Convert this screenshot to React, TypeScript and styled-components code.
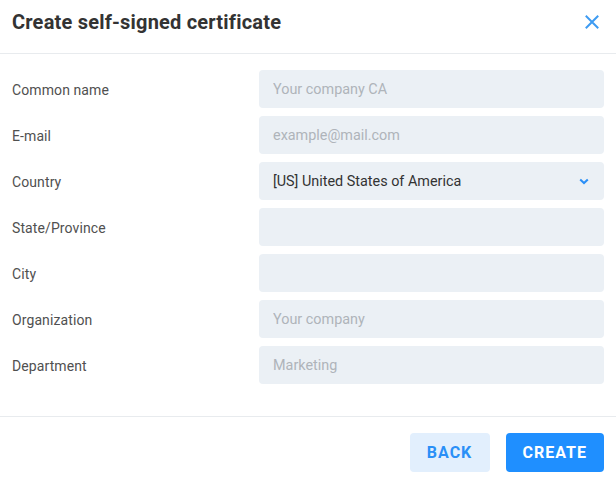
import React from "react";
import styled, { createGlobalStyle } from "styled-components";

const Global = createGlobalStyle`
  html, body { margin: 0; padding: 0; background: #fff; }
  body { font-family: Roboto, "Liberation Sans", Arial, sans-serif; }
  * { box-sizing: border-box; }
`;

const Dialog = styled.div`
  width: 616px;
  height: 478px;
  background: #fff;
  display: flex;
  flex-direction: column;
  overflow: hidden;
`;

const Header = styled.div`
  flex-shrink: 0;
  height: 54px;
  border-bottom: 1px solid #e8ebee;
  display: flex;
  align-items: center;
  justify-content: space-between;
  padding: 0 12px 10px 12px;
`;

const Title = styled.h1`
  margin: 0;
  font-size: 20px;
  font-weight: 700;
  color: #333;
  letter-spacing: 0.2px;
`;

const CloseButton = styled.button`
  border: 0;
  background: none;
  padding: 0;
  width: 24px;
  height: 24px;
  display: flex;
  align-items: center;
  justify-content: center;
  cursor: pointer;
`;

const Body = styled.div`
  flex-shrink: 0;
  display: flex;
  flex-direction: column;
  gap: 8px;
  padding: 16px 12px 32px 12px;
  border-bottom: 1px solid #e8ebee;
`;

const Row = styled.div`
  display: grid;
  grid-template-columns: 247px 1fr;
  align-items: center;
`;

const Label = styled.label`
  font-size: 14px;
  letter-spacing: 0.1px;
  color: #505050;
  padding-top: 2px;
`;

const Input = styled.input`
  height: 38px;
  border: 0;
  border-radius: 4px;
  background: #ebf0f5;
  padding: 0 14px;
  font-family: Roboto, "Liberation Sans", Arial, sans-serif;
  font-size: 14.4px;
  color: #333;
  outline: none;
  width: 100%;
  &::placeholder { color: #afb4ba; }
`;

const SelectBox = styled.div`
  height: 38px;
  border-radius: 4px;
  background: #ebf0f5;
  padding: 0 14px;
  display: flex;
  align-items: center;
  justify-content: space-between;
  font-size: 14.4px;
  color: #333;
`;

const Footer = styled.div`
  flex-shrink: 0;
  display: flex;
  justify-content: flex-end;
  gap: 16px;
  padding: 16px 12px;
`;

const Button = styled.button<{ $primary?: boolean }>`
  height: 39px;
  padding: 0 17px;
  min-width: ${(p) => (p.$primary ? "98px" : "80px")};
  border: 0;
  border-radius: 4px;
  font-family: Roboto, "Liberation Sans", Arial, sans-serif;
  font-size: 16px;
  font-weight: 700;
  letter-spacing: 1px;
  text-transform: uppercase;
  cursor: pointer;
  background: ${(p) => (p.$primary ? "#1f8fff" : "#e2effd")};
  color: ${(p) => (p.$primary ? "#fff" : "#2a8ff7")};
`;

const fields = [
  { label: "Common name", placeholder: "Your company CA" },
  { label: "E-mail", placeholder: "example@mail.com" },
  { label: "Country", select: "[US] United States of America" },
  { label: "State/Province", placeholder: "" },
  { label: "City", placeholder: "" },
  { label: "Organization", placeholder: "Your company" },
  { label: "Department", placeholder: "Marketing" },
];

export default function App() {
  return (
    <>
      <Global />
      <Dialog>
        <Header>
          <Title>Create self-signed certificate</Title>
          <CloseButton aria-label="Close">
            <svg width="14" height="14" viewBox="0 0 14 14">
              <path d="M1.5 1.5 L12.5 12.5 M12.5 1.5 L1.5 12.5" stroke="#3d9bf2" strokeWidth="2" strokeLinecap="square" fill="none" />
            </svg>
          </CloseButton>
        </Header>
        <Body>
          {fields.map((f) => (
            <Row key={f.label}>
              <Label>{f.label}</Label>
              {f.select ? (
                <SelectBox>
                  <span>{f.select}</span>
                  <svg width="10" height="7" viewBox="0 0 10 7" style={{ marginRight: 1 }}>
                    <path d="M1.2 1.4 L5 5 L8.8 1.4" stroke="#2a8ff7" strokeWidth="2" fill="none" />
                  </svg>
                </SelectBox>
              ) : (
                <Input placeholder={f.placeholder} />
              )}
            </Row>
          ))}
        </Body>
        <Footer>
          <Button>Back</Button>
          <Button $primary>Create</Button>
        </Footer>
      </Dialog>
    </>
  );
}
